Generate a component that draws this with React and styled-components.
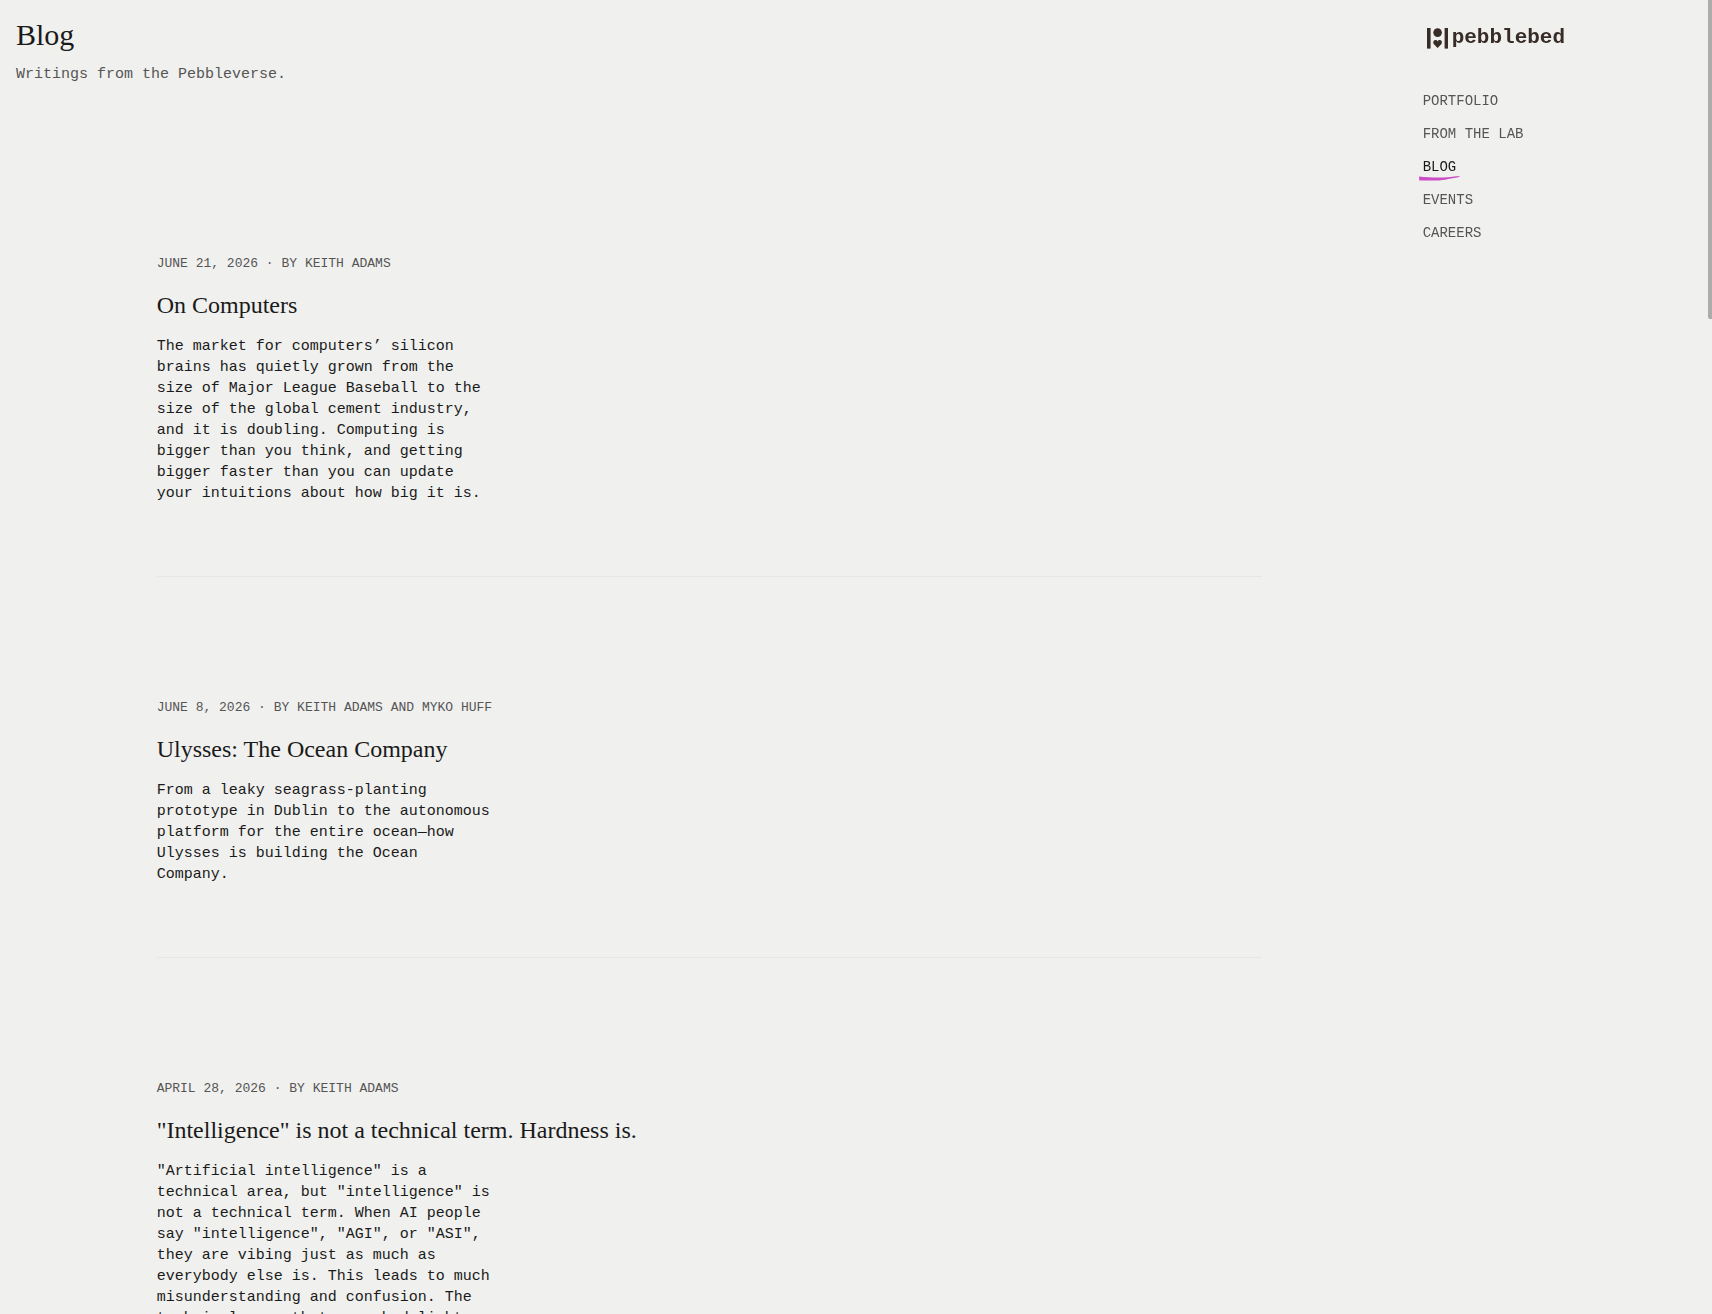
import React from "react";
import styled, { createGlobalStyle } from "styled-components";

const GlobalStyle = createGlobalStyle`
  *, *::before, *::after {
    box-sizing: border-box;
  }

  body {
    margin: 0;
    background: #f0f0ee;
    color: #1a1a1a;
    font-family: "Liberation Mono", monospace;
    font-size: 15px;
    line-height: 21px;
  }

  h1, h2, p, ul {
    margin: 0;
    padding: 0;
  }

  a {
    color: inherit;
    text-decoration: none;
  }
`;

const Page = styled.div`
  height: 100vh;
  overflow-y: auto;
  scrollbar-width: none;
`;

const Shell = styled.div`
  display: grid;
  grid-template-columns: repeat(12, 1fr);
  column-gap: 20px;
  align-items: start;
  padding: 16px 28px 0 16px;
`;

const Content = styled.div`
  grid-column: 1 / span 9;
  display: grid;
  grid-template-columns: subgrid;
`;

const Header = styled.header`
  grid-column: 1 / -1;
  display: flex;
  flex-direction: column;
  gap: 10px;
`;

const PageTitle = styled.h1`
  font-family: "Liberation Serif", serif;
  font-size: 30px;
  font-weight: 400;
  line-height: 38px;
`;

const Intro = styled.p`
  color: #555;
`;

const Posts = styled.main`
  grid-column: 2 / -1;
  margin-top: 48px;
`;

const Post = styled.article`
  display: flex;
  flex-direction: column;
  gap: 16px;
  padding: 121px 0 72px;
  border-bottom: 1px solid #e6e6e4;
`;

const Meta = styled.p`
  color: #555;
  font-size: 13px;
  line-height: 20px;
  text-transform: uppercase;
`;

const PostTitle = styled.h2`
  font-family: "Liberation Serif", serif;
  font-size: 24px;
  font-weight: 400;
  line-height: 30px;
`;

const Excerpt = styled.p`
  max-width: 336px;
`;

const Sidebar = styled.aside`
  grid-column: 11 / -1;
  position: sticky;
  top: 16px;
  display: flex;
  flex-direction: column;
  gap: 40px;
  padding-top: 9px;
`;

const LogoLink = styled.a`
  display: flex;
  align-items: center;
  gap: 4px;
  height: 26px;
  padding-left: 4px;
  color: #382c26;
  font-size: 21px;
  font-weight: 700;
  line-height: 24px;
`;

const NavList = styled.ul`
  display: flex;
  flex-direction: column;
  align-items: flex-start;
  gap: 12px;
  list-style: none;
`;

const NavLink = styled.a`
  position: relative;
  display: block;
  color: ${({ $active }) => ($active ? "#1a1a1a" : "#555")};
  font-size: 14px;
  text-transform: uppercase;
`;

const Stroke = styled.svg`
  position: absolute;
  left: -4px;
  bottom: -3px;
  width: 41px;
  height: 5px;
`;

const ScrollThumb = styled.div`
  position: fixed;
  top: 0;
  right: 0;
  width: 4px;
  height: 319px;
  border-radius: 0 0 0 2px;
  background: #acacac;
`;

const links = ["Portfolio", "From the Lab", "Blog", "Events", "Careers"];

const posts = [
  {
    id: "on-computers",
    meta: "June 21, 2026 · By Keith Adams",
    title: "On Computers",
    excerpt:
      "The market for computers’ silicon brains has quietly grown from the size of Major League Baseball to the size of the global cement industry, and it is doubling. Computing is bigger than you think, and getting bigger faster than you can update your intuitions about how big it is.",
  },
  {
    id: "ulysses",
    meta: "June 8, 2026 · By Keith Adams and Myko Huff",
    title: "Ulysses: The Ocean Company",
    excerpt:
      "From a leaky seagrass-planting prototype in Dublin to the autonomous platform for the entire ocean—how Ulysses is building the Ocean Company.",
  },
  {
    id: "hardness",
    meta: "April 28, 2026 · By Keith Adams",
    title: '"Intelligence" is not a technical term. Hardness is.',
    excerpt:
      '"Artificial intelligence" is a technical area, but "intelligence" is not a technical term. When AI people say "intelligence", "AGI", or "ASI", they are vibing just as much as everybody else is. This leads to much misunderstanding and confusion. The technical area that can shed light',
  },
];

const LogoMark = () => (
  <svg width="21" height="21" viewBox="0 0 21 21" fill="currentColor" aria-hidden="true">
    <rect x="0" y="0" width="3.6" height="20.6" />
    <rect x="17.6" y="0" width="3.4" height="20.6" />
    <circle cx="10.6" cy="4.6" r="4.3" />
    <path d="M10.6 20 7.2 16.6C5.6 15 6.2 12 8.3 12c1.1 0 1.9.5 2.3 1.4.4-.9 1.2-1.4 2.3-1.4 2.1 0 2.7 3 1.1 4.6Z" />
  </svg>
);

// Brush stroke under the current page
const BrushStroke = () => (
  <Stroke viewBox="0 0 41 5" preserveAspectRatio="none" aria-hidden="true">
    <path
      d="M0 .4C7 1.3 16 1.7 24 1.5 31 1.2 36 .3 41 0 40.6 1.3 36 1.9 32 2.5 28 3.3 25 4.1 20 4.4 13 4.7 6 4.3.3 4.6Z"
      fill="#cc4cc6"
    />
  </Stroke>
);

const PostItem = ({ post }) => (
  <Post>
    <Meta>{post.meta}</Meta>
    <PostTitle>
      <a href={`#${post.id}`}>{post.title}</a>
    </PostTitle>
    <Excerpt>{post.excerpt}</Excerpt>
  </Post>
);

const App = () => (
  <>
    <GlobalStyle />
    <Page>
      <Shell>
        <Content>
          <Header>
            <PageTitle>Blog</PageTitle>
            <Intro>Writings from the Pebbleverse.</Intro>
          </Header>
          <Posts>
            {posts.map((post) => (
              <PostItem key={post.id} post={post} />
            ))}
          </Posts>
        </Content>
        <Sidebar>
          <LogoLink href="#home">
            <LogoMark />
            pebblebed
          </LogoLink>
          <nav>
            <NavList>
              {links.map((link) => {
                const active = link === "Blog";
                return (
                  <li key={link}>
                    <NavLink
                      href={`#${link.toLowerCase().replaceAll(" ", "-")}`}
                      $active={active}
                      aria-current={active ? "page" : undefined}
                    >
                      {link}
                      {active && <BrushStroke />}
                    </NavLink>
                  </li>
                );
              })}
            </NavList>
          </nav>
        </Sidebar>
      </Shell>
      <ScrollThumb />
    </Page>
  </>
);

export default App;
